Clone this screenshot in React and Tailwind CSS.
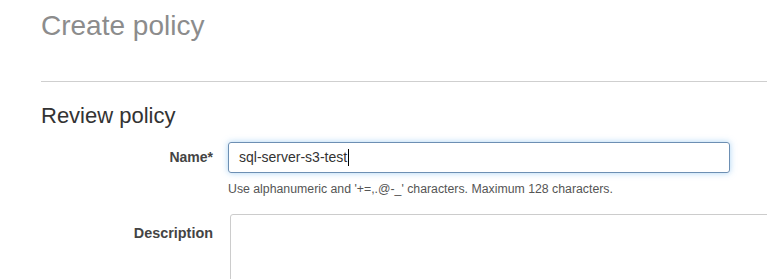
import React from 'react';

const App = () => {
  return (
    <div className="w-[767px] h-[279px] overflow-hidden bg-white pl-[41px] font-['Liberation_Sans',Arial,sans-serif]">
      <h1 className="pt-[12px] text-[28px] leading-[28px] text-[#8c8c8c]">Create policy</h1>

      <div className="mt-[41px] border-t border-[#cfcfcf]" />

      <h2 className="mt-[23px] text-[22px] leading-[22px] text-[#333333]">Review policy</h2>

      {/* Name field */}
      <div className="mt-[15px] grid grid-cols-[172px_502px] gap-x-[15px]">
        <label className="flex items-center justify-end text-[14px] font-bold text-[#444444]">Name*</label>
        <div className="flex h-[31px] items-center rounded-[3px] border border-[#6d8fb3] pl-[10px] text-[14px] text-[#333333] shadow-[0_0_6px_rgba(102,175,233,0.55)]">
          <span>sql-server-s3-test</span>
          <span className="ml-[1px] h-[17px] w-px bg-black" />
        </div>
        <div />
        <p className="mt-[10px] text-[12.3px] leading-[12px] text-[#555555]">
          Use alphanumeric and '+=,.@-_' characters. Maximum 128 characters.
        </p>
      </div>

      {/* Description field */}
      <div className="mt-[19px] grid grid-cols-[172px_600px] gap-x-[17px]">
        <label className="pt-[12px] text-right text-[14.4px] leading-[14px] font-bold text-[#444444]">Description</label>
        <div className="h-[90px] rounded-[3px] border border-[#cccccc]" />
      </div>
    </div>
  );
};

export default App;
